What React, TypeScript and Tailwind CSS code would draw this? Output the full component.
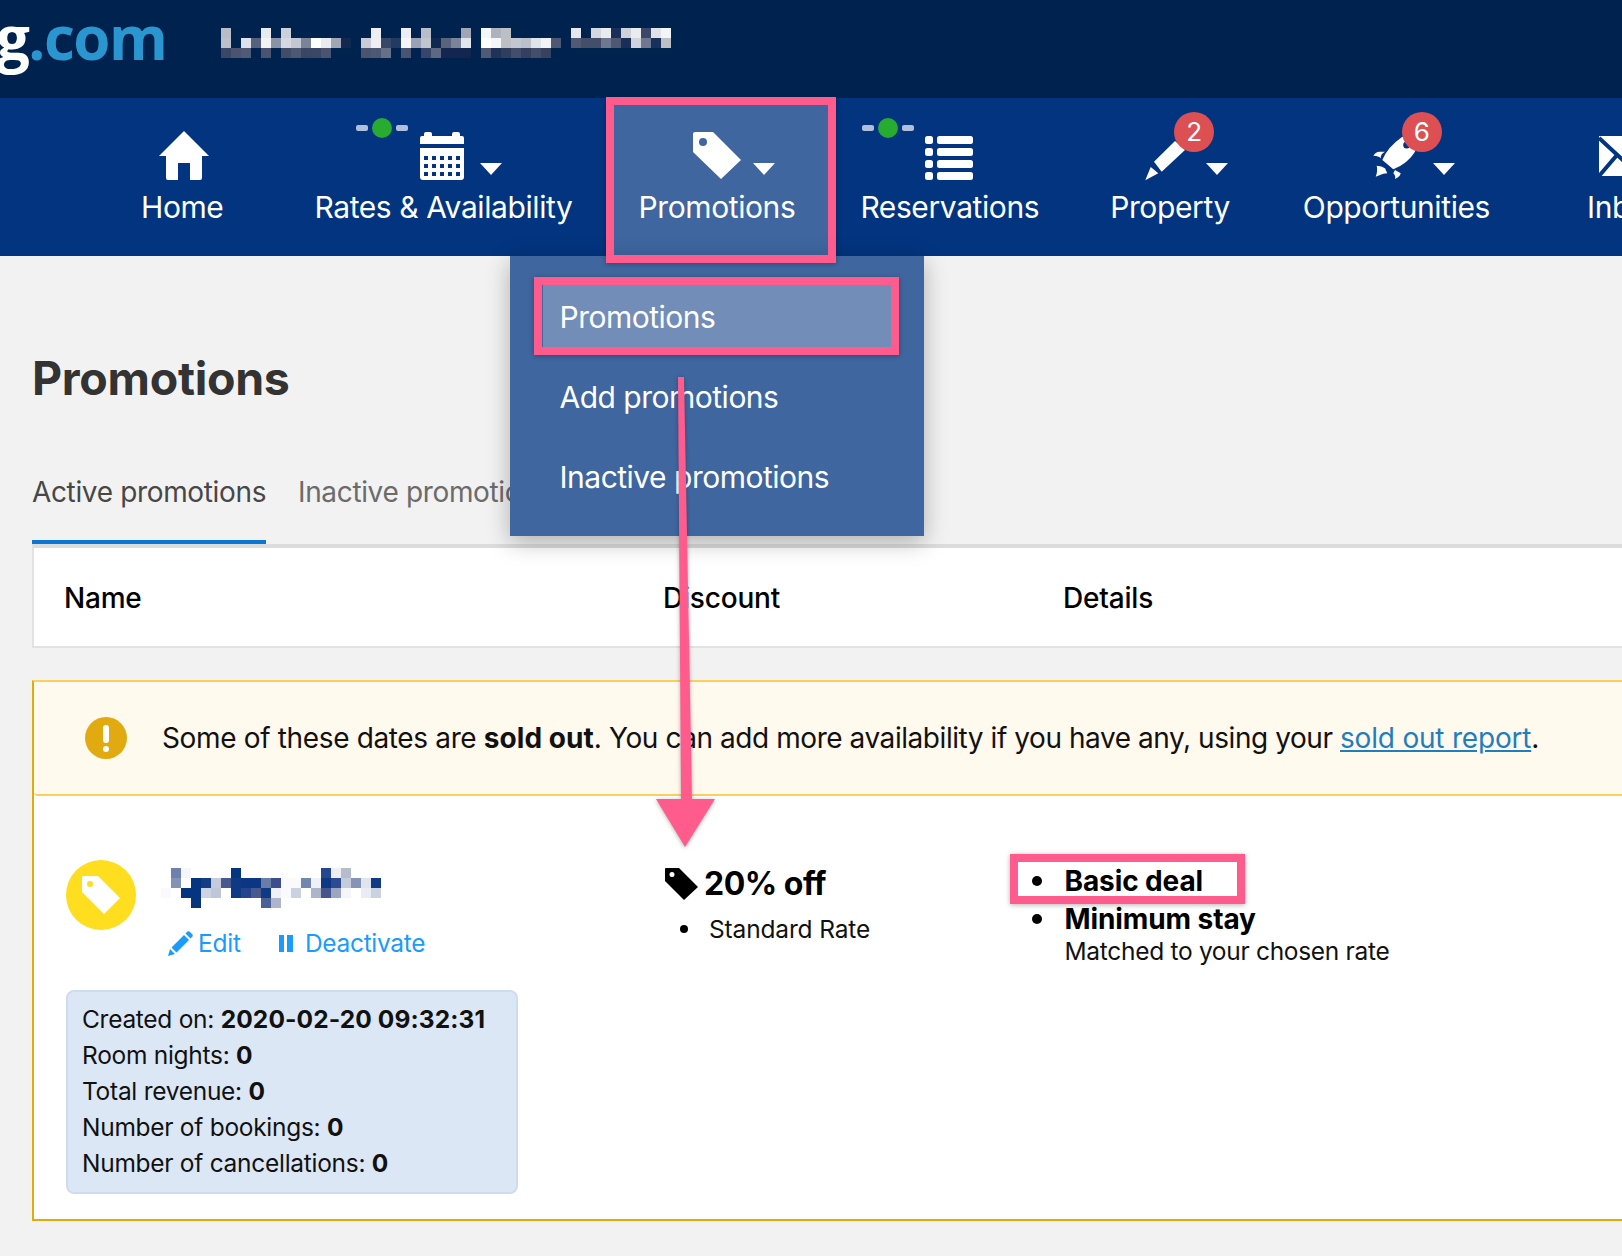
import React from 'react';

const HEADER_PIXELS: [number, number, string][] = [
  [0,0,'#b8bcc6'],[4,0,'#e8eaee'],[6,0,'#ccd0da'],[15,0,'#eceef2'],[18,0,'#eceef2'],[20,0,'#b8bdc9'],[24,0,'#a0a6b5'],[26,0,'#f5f6f8'],[27,0,'#adb2bd'],[28,0,'#bcbfc6'],[35,0,'#e5e7ec'],[37,0,'#d5d7de'],[38,0,'#e9ebef'],[39,0,'#1a2f58'],[40,0,'#ced1da'],[41,0,'#e9ebef'],[42,0,'#3a4767'],[43,0,'#dfe2e8'],[44,0,'#f3f5f7'],
  [0,1,'#bcc0ca'],[2,1,'#dfe2ea'],[3,1,'#56617e'],[4,1,'#f2f3f5'],[5,1,'#8a93a6'],[6,1,'#d5d8e1'],[7,1,'#c3c7d1'],[8,1,'#7b8398'],[9,1,'#ffffff'],[10,1,'#e9ebef'],[11,1,'#a0a6b5'],[12,1,'#12284f'],[14,1,'#c9ccd6'],[15,1,'#edeff2'],[16,1,'#38466a'],[17,1,'#233a62'],[18,1,'#f5f6f8'],[19,1,'#9aa1b3'],[20,1,'#c0c5d0'],[21,1,'#0e2850'],[22,1,'#5a637c'],[23,1,'#7b8399'],[24,1,'#e2e5eb'],[26,1,'#ffffff'],[27,1,'#f3f5f7'],[28,1,'#bdbfc4'],[29,1,'#c3c7d1'],[30,1,'#bcc0cb'],[31,1,'#e0e3e9'],[32,1,'#f2f3f6'],[33,1,'#4d5873'],[35,1,'#505a75'],[36,1,'#434e6b'],[37,1,'#434e6b'],[38,1,'#6f7890'],[39,1,'#4d5873'],[40,1,'#1a2f58'],[41,1,'#d0d3dc'],[42,1,'#6f7890'],[43,1,'#18305a'],[44,1,'#bcbfc5'],
  [0,2,'#3a4766'],[1,2,'#4a5471'],[2,2,'#505a75'],[4,2,'#4a5471'],[6,2,'#414c69'],[7,2,'#4d5873'],[8,2,'#394665'],[9,2,'#3a4767'],[10,2,'#4a5471'],[14,2,'#4a5471'],[15,2,'#4d5873'],[16,2,'#667189'],[18,2,'#4a5471'],[20,2,'#38456a'],[21,2,'#5e6880'],[22,2,'#13264f'],[23,2,'#122650'],[24,2,'#12264f'],[26,2,'#505a72'],[27,2,'#1f3358'],[28,2,'#2f3d5e'],[29,2,'#434e6a'],[30,2,'#373f60'],[31,2,'#434e6b'],[32,2,'#37425f'],
];

const NAME_PIXELS: [number, number, string][] = [
  [1,0,'#6f80ab'],[2,0,'#f5f6f9'],[7,0,'#063580'],[16,0,'#24478d'],[17,0,'#eeeff5'],[18,0,'#b5bccd'],
  [1,1,'#8393b5'],[3,1,'#063580'],[4,1,'#153d85'],[5,1,'#c5cbdb'],[6,1,'#47598f'],[7,1,'#0f3983'],[8,1,'#0b3782'],[9,1,'#0b3782'],[10,1,'#6a7da6'],[11,1,'#3a4f8c'],[12,1,'#fafafc'],[13,1,'#fafafc'],[14,1,'#7287ae'],[15,1,'#f0f1f6'],[16,1,'#0e3884'],[17,1,'#2c4b90'],[18,1,'#c5cbdb'],[19,1,'#8394b8'],[20,1,'#e0e4ec'],[21,1,'#0f3b84'],
  [0,2,'#fafafc'],[2,2,'#063580'],[3,2,'#063580'],[4,2,'#cdd3e1'],[5,2,'#bfc6d8'],[7,2,'#0f3983'],[8,2,'#26448c'],[9,2,'#49598e'],[10,2,'#0f3983'],[11,2,'#f0f1f6'],[12,2,'#fafafc'],[13,2,'#cbd1df'],[15,2,'#aeb5cb'],[16,2,'#47558d'],[17,2,'#9ba6c2'],[18,2,'#f5f6f9'],[20,2,'#e9ecf2'],[21,2,'#cbd1e1'],
  [3,3,'#063580'],[10,3,'#4a6198'],[11,3,'#aeb5cb'],
];

function Mosaic({ pixels, cols, rows, className }: { pixels: [number, number, string][]; cols: number; rows: number; className?: string }) {
  return (
    <svg width={cols * 10} height={rows * 10} viewBox={`0 0 ${cols * 10} ${rows * 10}`} shapeRendering="crispEdges" className={className}>
      {pixels.map(([x, y, c], i) => (
        <rect key={i} x={x * 10} y={y * 10} width="10" height="10" fill={c} />
      ))}
    </svg>
  );
}

const Caret = ({ className }: { className: string }) => (
  <svg width="22" height="12" viewBox="0 0 22 12" className={`mt-[32px] shrink-0 ${className}`}>
    <path d="M0 0H22L11 12Z" fill="#fff" />
  </svg>
);

const StatusDot = ({ className }: { className: string }) => (
  <div className={`absolute top-[20px] flex items-center gap-[4px] ${className}`}>
    <div className="w-[12px] h-[6px] rounded-[2px] bg-[#b0bfdb]" />
    <div className="w-[20px] h-[20px] rounded-full bg-[#27ab31]" />
    <div className="w-[12px] h-[6px] rounded-[2px] bg-[#b0bfdb]" />
  </div>
);

const Badge = ({ n, className }: { n: number; className: string }) => (
  <div className={`absolute top-[14px] w-[40px] h-[40px] rounded-full bg-[#dc5053] text-white text-[26px] leading-[40px] text-center ${className}`}>
    {n}
  </div>
);

function NavLabel({ children }: { children: React.ReactNode }) {
  return <div className="mt-[9px] text-[30px] leading-[36px] text-white tracking-[-0.4px] whitespace-nowrap">{children}</div>;
}

const HomeIcon = () => (
  <svg width="50" height="49" viewBox="0 0 50 49" className="ml-[18px]">
    <path d="M25 0L50 25H43V47Q43 49 41 49H31V32H19V49H9Q7 49 7 47V25H0Z" fill="#fff" />
  </svg>
);

const CalendarIcon = () => (
  <svg width="44" height="49" viewBox="0 0 44 49" className="ml-[106px]">
    <path d="M4 5V3Q4 1 6 1H10Q12 1 12 3V5H32V3Q32 1 34 1H38Q40 1 40 3V5H42Q44 5 44 7V13H0V7Q0 5 2 5Z" fill="#fff" />
    <path d="M0 17H44V46Q44 49 41 49H3Q0 49 0 46Z" fill="#fff" />
    {[25, 33, 41].map(y =>
      [4, 12, 20, 28, 36].map(x => <rect key={`${x}-${y}`} x={x} y={y} width="4" height="4" fill="#03347f" />)
    )}
  </svg>
);

const TagIcon = () => (
  <svg width="48" height="47" viewBox="0 0 48 47" className="ml-[54px] mt-[1px]">
    <path fillRule="evenodd" d="M0 2Q0 0 2 0H20L48 28L28 47L0 20ZM10 6A4 4 0 1 0 10 14A4 4 0 1 0 10 6Z" fill="#fff" />
  </svg>
);

const ListIcon = () => (
  <svg width="48" height="44" viewBox="0 0 48 44" className="ml-[65px] mt-[5px]">
    {[0, 12, 24, 36].map(y => (
      <g key={y} fill="#fff">
        <rect x="0" y={y} width="8" height="8" rx="2.5" />
        <rect x="12" y={y} width="36" height="8" rx="2.5" />
      </g>
    ))}
  </svg>
);

const PencilIcon = () => (
  <svg width="45" height="50" viewBox="0 0 45 50" className="ml-[35px] overflow-visible">
    <path d="M0.3 49.3L5.7 36L13.3 42.3Z" fill="#fff" />
    <path d="M9 30.7L16.7 40.7L40 19L30 10Z" fill="#fff" />
  </svg>
);

const RocketIcon = () => (
  <svg width="48" height="49" viewBox="0 0 48 49" className="ml-[67px] overflow-visible">
    <path d="M12.3 29Q18 15.7 31.7 6.3L53 -3L45 20.7Q38 32.3 23.3 38.3Z" fill="#fff" />
    <circle cx="36.7" cy="14" r="3.5" fill="#03347f" />
    <path d="M3.3 24.7Q6 20.7 9.3 20.7L15 20.7Q10.5 23 10.7 27.3Q9 24.7 3.3 24.7Z" fill="#fff" />
    <path d="M6.7 34.7Q12 35 15 37.3L17.3 42.3Q13 42.5 10 44L5.7 45.7Q8 40 6.7 34.7Z" fill="#fff" />
    <path d="M25 39L30.7 42.3Q30 46 25 48Q26 45 23.3 42.3Z" fill="#fff" />
  </svg>
);

const InboxIcon = () => (
  <svg width="50" height="40" viewBox="0 0 50 40" className="ml-[12px] mt-[5px]">
    <rect width="50" height="40" fill="#fff" />
    <path d="M0 2L25 25L50 2M0 40L18 19M50 40L32 19" stroke="#03347f" strokeWidth="4" fill="none" />
  </svg>
);

function Frame({ className }: { className: string }) {
  return <div className={`absolute border-[8px] border-[#ff5c8d] shadow-[0_1px_5px_rgba(0,0,0,0.3)] pointer-events-none ${className}`} />;
}

const Row = ({ label, value }: { label: string; value: string }) => (
  <div className="h-[36px] leading-[36px] whitespace-nowrap">
    {label} <span className="font-bold tracking-[0.1px]">{value}</span>
  </div>
);

export default function App() {
  return (
    <div className="relative w-[1622px] h-[1256px] overflow-hidden bg-[#f2f2f2] font-['Inter',sans-serif]">
      <header className="h-[98px] bg-[#00224f] flex items-start overflow-hidden">
        <div className="ml-[-42px] mt-[1px] w-[215px] text-[60px] leading-[72px] font-['Open_Sans',sans-serif] font-bold tracking-[-1.5px] whitespace-nowrap text-white">
          ng<span className="text-[#2a96cf]">.com</span>
        </div>
        <Mosaic pixels={HEADER_PIXELS} cols={45} rows={3} className="ml-[48px] mt-[28px] shrink-0" />
      </header>

      <nav className="h-[158px] bg-[#03347f] flex items-stretch pl-[141px]">
        <div className="pt-[33px]">
          <div className="flex items-start h-[49px]"><HomeIcon /></div>
          <NavLabel>Home</NavLabel>
        </div>
        <div className="relative pt-[33px] ml-[91px]">
          <StatusDot className="left-[42px]" />
          <div className="flex items-start h-[49px]"><CalendarIcon /><Caret className="ml-[16px]" /></div>
          <NavLabel>Rates &amp; Availability</NavLabel>
        </div>
        <div className="pt-[33px] ml-[33px] px-[33px] bg-[#3f669f]">
          <div className="flex items-start h-[49px]"><TagIcon /><Caret className="ml-[12px]" /></div>
          <NavLabel>Promotions</NavLabel>
        </div>
        <div className="relative pt-[33px] ml-[32px]">
          <StatusDot className="left-[2px]" />
          <div className="flex items-start h-[49px]"><ListIcon /></div>
          <NavLabel>Reservations</NavLabel>
        </div>
        <div className="relative pt-[33px] ml-[71px]">
          <div className="flex items-start h-[49px]"><PencilIcon /><Caret className="ml-[16px]" /></div>
          <Badge n={2} className="left-[64px]" />
          <NavLabel>Property</NavLabel>
        </div>
        <div className="relative pt-[33px] ml-[73px]">
          <div className="flex items-start h-[49px]"><RocketIcon /><Caret className="ml-[15px]" /></div>
          <Badge n={6} className="left-[99px]" />
          <NavLabel>Opportunities</NavLabel>
        </div>
        <div className="pt-[33px] ml-[97px]">
          <div className="flex items-start h-[49px]"><InboxIcon /></div>
          <NavLabel>Inbox</NavLabel>
        </div>
      </nav>

      <main className="pl-[32px]">
        <h1 className="mt-[95px] text-[46.5px] leading-[54px] font-bold text-[#333] tracking-[-0.3px]">Promotions</h1>

        <div className="mt-[70px] flex items-start text-[28px] leading-[34px] tracking-[-0.35px]">
          <div className="pb-[31px] border-b-4 border-[#0b77d2] text-[#474747] w-[234px] whitespace-nowrap">Active promotions</div>
          <div className="ml-[32px] text-[#6b6b6b] whitespace-nowrap">Inactive promotions</div>
        </div>

        <div className="w-[1700px] h-[104px] pt-[2px] bg-white border-t-4 border-x-2 border-b-2 border-t-[#dcdcdc] border-x-[#e2e2e2] border-b-[#e2e2e2] flex items-center text-[28px] font-medium text-black tracking-[-0.2px]">
          <div className="w-[629px] pl-[30px]">Name</div>
          <div className="w-[400px]">Discount</div>
          <div>Details</div>
        </div>

        <div className="mt-[32px] w-[1700px] h-[541px] bg-white border-2 border-[#e3aa0e] border-t-[#fdd05e]">
          <div className="h-[114px] bg-[#fff9ee] border-b-2 border-[#fdd05e] flex items-center pl-[51px] text-[28px] text-[#111] tracking-[-0.35px] rounded-b-[4px] whitespace-nowrap">
            <div className="w-[42px] h-[42px] rounded-full bg-[#e2aa11] flex flex-col items-center justify-center shrink-0">
              <div className="w-[6px] h-[18px] rounded-[3px] bg-white" />
              <div className="mt-[3px] w-[6px] h-[6px] rounded-full bg-white" />
            </div>
            <span className="ml-[35px]">
              Some of these dates are <b className="tracking-[0.05px]">sold out</b>.{' '}
              <span className="tracking-[-0.44px]">You can add more availability if you have any, using your</span>{' '}
              <span className="text-[#1f7ebf] underline tracking-[-0.2px]">sold out report</span>.
            </span>
          </div>

          <div className="flex items-start">
            <div className="w-[629px] pl-[32px] pt-[64px]">
              <div className="flex items-start">
                <div className="w-[70px] h-[70px] rounded-full bg-[#ffdd1f] flex items-center justify-center shrink-0">
                  <svg width="38" height="38" viewBox="0 0 38 38">
                    <path fillRule="evenodd" d="M0 1Q0 0 1 0H16L38 22L22 38L0 16ZM8 5A3 3 0 1 0 8 11A3 3 0 1 0 8 5Z" fill="#fff" />
                  </svg>
                </div>
                <div className="ml-[25px] mt-[8px]">
                  <Mosaic pixels={NAME_PIXELS} cols={22} rows={4} className="block" />
                  <div className="mt-[20px] flex items-center text-[24.5px] leading-[30px] text-[#1b9bfb] tracking-[-0.2px] whitespace-nowrap">
                    <svg width="25" height="25" viewBox="0 0 25 25" className="ml-[7px]">
                      <path d="M0 25L2 18L7 23Z M3.5 16.5L16 4L21 9L8.500 21.5Z M17.5 2.500L19.500 0.500Q20.500 0 21.500 0.500L24.500 3.500Q25 4.500 24.500 5.500L22.500 7.500Z" fill="#1b9bfb" />
                    </svg>
                    <span className="ml-[5px]">Edit</span>
                    <div className="ml-[38px] flex gap-[3px]">
                      <div className="w-[5.500px] h-[17px] bg-[#1b9bfb]" />
                      <div className="w-[5.500px] h-[17px] bg-[#1b9bfb]" />
                    </div>
                    <span className="ml-[12px] tracking-[-0.3px]">Deactivate</span>
                  </div>
                </div>
              </div>
              <div className="mt-[32px] w-[452px] h-[204px] rounded-[8px] bg-[#dce7f5] border-2 border-[#cfdcee] pl-[14px] pt-[9px] text-[24.5px] text-[#111] tracking-[-0.28px]">
                <Row label="Created on:" value="2020-02-20 09:32:31" />
                <Row label="Room nights:" value="0" />
                <Row label="Total revenue:" value="0" />
                <Row label="Number of bookings:" value="0" />
                <Row label="Number of cancellations:" value="0" />
              </div>
            </div>

            <div className="w-[369px] pl-[2px] pt-[68px]">
              <div className="flex items-center h-[40px] text-[32px] font-bold text-black tracking-[-0.5px] whitespace-nowrap">
                <svg width="33" height="32" viewBox="0 0 33 32" className="shrink-0">
                  <path fillRule="evenodd" d="M0 1Q0 0 1 0H14L33 19L19 32L0 13ZM7 4A2.500 2.500 0 1 0 7 9A2.500 2.500 0 1 0 7 4Z" fill="#000" />
                </svg>
                <span className="ml-[6px]">20% off</span>
              </div>
              <div className="mt-[9px] flex items-center h-[32px] text-[24.5px] text-[#111] tracking-[-0.15px] whitespace-nowrap">
                <div className="ml-[15px] w-[8px] h-[8px] rounded-full bg-black" />
                <span className="ml-[21px]">Standard Rate</span>
              </div>
            </div>

            <div className="pt-[66px]">
              <div className="flex items-center h-[38px] text-[28px] font-bold text-black tracking-[-0.1px] whitespace-nowrap">
                <div className="w-[10px] h-[10px] rounded-full bg-black" />
                <span className="ml-[22.5px]">Basic deal</span>
              </div>
              <div className="flex items-center h-[38px] text-[28px] font-bold text-black tracking-[-0.1px] whitespace-nowrap">
                <div className="w-[10px] h-[10px] rounded-full bg-black" />
                <span className="ml-[22.5px]">Minimum stay</span>
              </div>
              <div className="-mt-[2px] pl-[32.5px] h-[30px] leading-[30px] text-[24.5px] text-[#111] tracking-[-0.3px] whitespace-nowrap">Matched to your chosen rate</div>
            </div>
          </div>
        </div>
      </main>

      {/* dropdown under the Promotions tab */}
      <div className="absolute left-[510px] top-[256px] w-[414px] h-[280px] bg-[#3f669f] shadow-[0_6px_22px_rgba(0,0,0,0.28)] pt-[29px] text-[30px] text-white tracking-[-0.5px]">
        <div className="mx-[33px] h-[62px] pl-[16.5px] pt-[1px] bg-[#728db8] leading-[62px]">Promotions</div>
        <div className="mt-[18px] pl-[49.5px] pt-[1px] h-[62px] leading-[62px]">Add promotions</div>
        <div className="mt-[18px] pl-[49.5px] pt-[1px] h-[62px] leading-[62px]">Inactive promotions</div>
      </div>

      {/* pink annotations drawn over the page */}
      <Frame className="left-[606px] top-[97px] w-[230px] h-[166px]" />
      <Frame className="left-[534px] top-[277px] w-[365px] h-[78px]" />
      <Frame className="left-[1010px] top-[854px] w-[235px] h-[50px]" />
      <svg width="1622" height="1256" viewBox="0 0 1622 1256" className="absolute left-0 top-0 pointer-events-none drop-shadow-[0_1px_2px_rgba(0,0,0,0.3)]">
        <path d="M678 377H684L692 799H715L685 847L656 799H681Z" fill="#ff5c8d" />
      </svg>
    </div>
  );
}
